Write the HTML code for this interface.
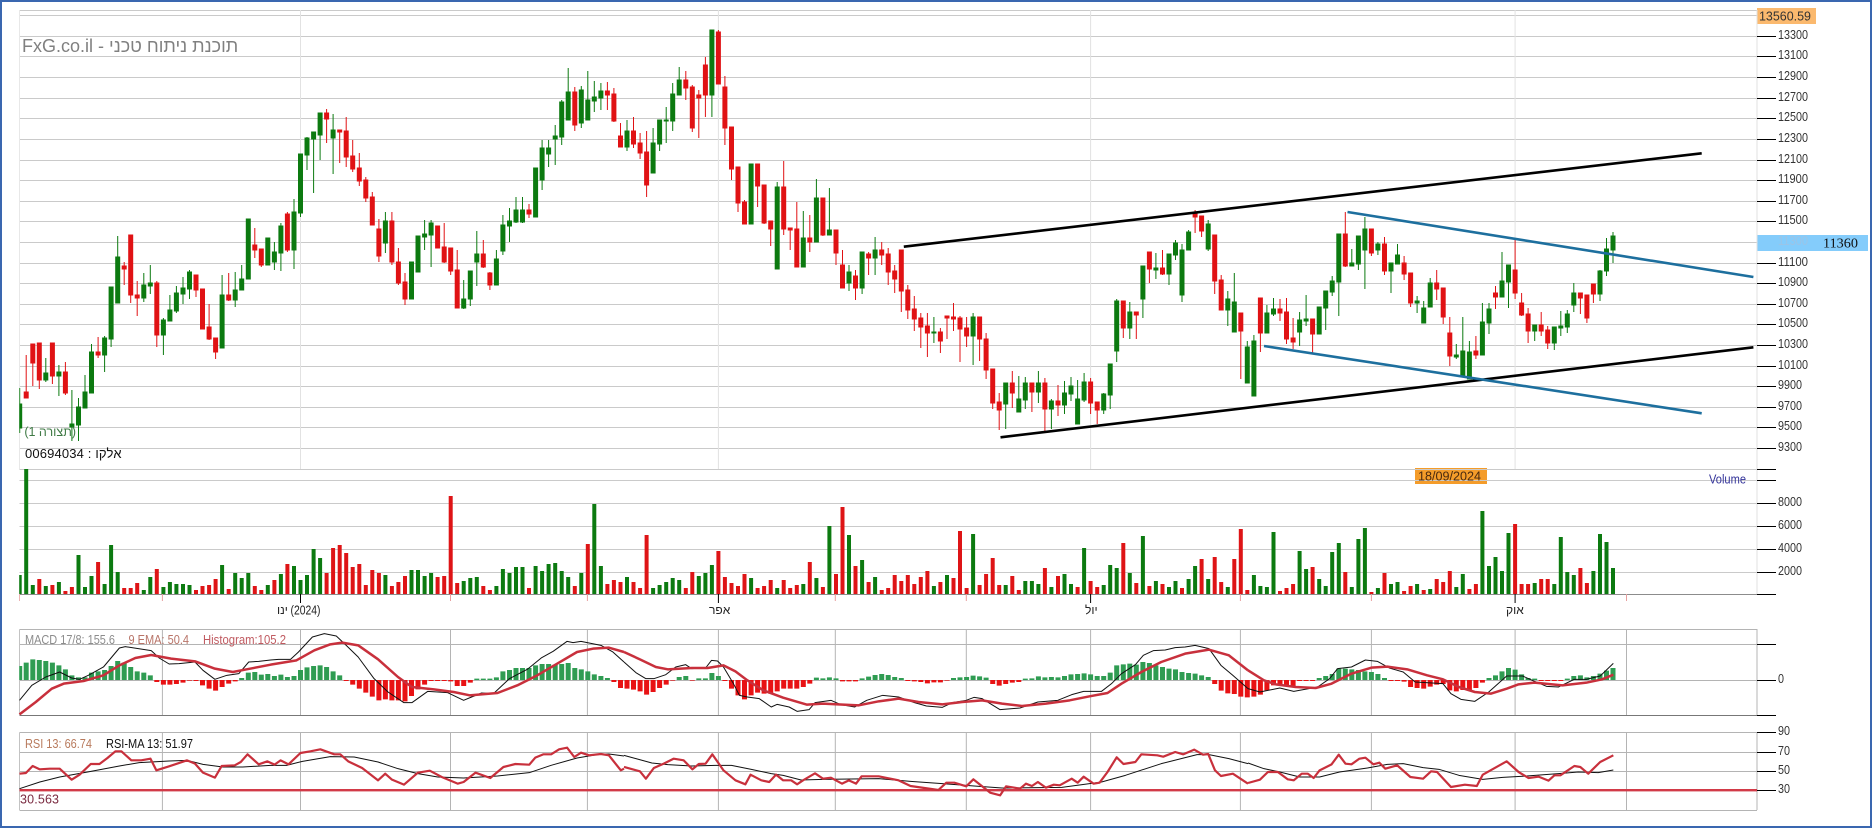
<!DOCTYPE html>
<html lang="he"><head><meta charset="utf-8"><title>FxG</title>
<style>
html,body{margin:0;padding:0;background:#fff;width:1872px;height:828px;overflow:hidden}
#f{position:absolute;left:0;top:0;width:1868px;height:824px;border:2px solid #3a67b0;overflow:hidden}
svg{position:absolute;left:0;top:0}
.t{position:absolute;white-space:nowrap;font-family:"Liberation Sans","Noto Sans CJK JP",sans-serif;line-height:1}
text{font-family:"Liberation Sans","Noto Sans CJK JP",sans-serif;font-size:13px;fill:#333}
</style></head><body>
<svg width="1872" height="828" viewBox="0 0 1872 828">
<rect x="1757" y="8" width="59" height="16" fill="#fbb96e"/>
<rect x="1757" y="235" width="111" height="16" fill="#84ccfb"/>
<rect x="1415" y="468" width="72" height="16" fill="#f49c2a"/>
<path fill="none" stroke="#cacaca" d="M19.5 10.5H1757M19.5 15.5H1757M19.5 36.5H1757M19.5 56.5H1757M19.5 77.5H1757M19.5 98.5H1757M19.5 118.5H1757M19.5 139.5H1757M19.5 160.5H1757M19.5 180.5H1757M19.5 201.5H1757M19.5 221.5H1757M19.5 242.5H1757M19.5 263.5H1757M19.5 283.5H1757M19.5 304.5H1757M19.5 324.5H1757M19.5 345.5H1757M19.5 366.5H1757M19.5 386.5H1757M19.5 407.5H1757M19.5 427.5H1757M19.5 448.5H1757M19.5 469.5H1757M19.5 480.5H1757M19.5 503.5H1757M19.5 526.5H1757M19.5 549.5H1757M19.5 572.5H1757"/>
<path fill="none" stroke="#e2e2e2" d="M19.5 10V469M300.5 10V469M718.4 10V469M1090.6 10V469M1515.1 10V469M1757 10V594"/>
<path fill="none" stroke="#8c8c8c" d="M19.5 594.5H1757"/>
<path fill="none" stroke="#b4b4b4" d="M19.5 629.5H1757V715M19.5 629.5V715M19.5 644.5H1757M19.5 680.5H1757M19.5 732.5H1757V810M19.5 732.5V810M19.5 752.5H1757M19.5 771.5H1757M19.5 810.5H1757M162.4 629V715M300.5 629V715M450.5 629V715M587.4 629V715M718.4 629V715M835.3 629V715M966.3 629V715M1090.6 629V715M1240.4 629V715M1371.4 629V715M1515.1 629V715M1626.5 629V715M162.4 732V810M300.5 732V810M450.5 732V810M587.4 732V810M718.4 732V810M835.3 732V810M966.3 732V810M1090.6 732V810M1240.4 732V810M1371.4 732V810M1515.1 732V810M1626.5 732V810"/>
<path fill="none" stroke="#777" d="M19.5 715.5H1757"/>
<path fill="none" stroke="#000" d="M1757 36.5H1776M1757 56.5H1776M1757 77.5H1776M1757 98.5H1776M1757 118.5H1776M1757 139.5H1776M1757 160.5H1776M1757 180.5H1776M1757 201.5H1776M1757 221.5H1776M1757 263.5H1776M1757 283.5H1776M1757 304.5H1776M1757 324.5H1776M1757 345.5H1776M1757 366.5H1776M1757 386.5H1776M1757 407.5H1776M1757 427.5H1776M1757 448.5H1776M1757 469.5H1776M1757 480.5H1776M1757 503.5H1776M1757 526.5H1776M1757 549.5H1776M1757 572.5H1776M1757 594.5H1776M1757 644.5H1776M1757 680.5H1776M1757 715.5H1776M1757 732.5H1776M1757 752.5H1776M1757 771.5H1776M1757 790.5H1776M300.5 594V603M718.4 594V603M1090.6 594V603M1515.1 594V603"/>
<path fill="none" stroke="#e8a0a0" d="M19.5 594V601M162.4 594V601M450.5 594V601M587.4 594V601M835.3 594V601M966.3 594V601M1240.4 594V601M1371.4 594V601M1626.5 594V601"/>

<!-- green candles -->
<path fill="#0c7a10" stroke="#0c7a10" d="M19.7 388V433M19.7 404h2V428h-4V404zM45.8 358V382M45.8 373h2V380h-4V373zM58.9 365V396M58.9 372h2V376h-4V372zM71.9 390V441M71.9 424h2V427h-4V424zM78.5 398V441M78.5 407h2V425h-4V407zM85 375V408M85 392h2V408h-4V392zM91.5 344V393M91.5 352h2V393h-4V352zM104.6 336V372M104.6 338h2V355h-4V338zM111.1 287V347M111.1 287h2V339h-4V287zM117.7 236V303M117.7 257h2V303h-4V257zM143.8 273V302M143.8 285h2V298h-4V285zM150.3 265V294M150.3 283h2V286h-4V283zM163.4 318V355M163.4 320h2V335h-4V320zM169.9 295V321M169.9 310h2V321h-4V310zM176.4 286V313M176.4 293h2V311h-4V293zM183 277V304M183 288h2V294h-4V288zM189.5 270V299M189.5 272h2V289h-4V272zM222.1 275V348M222.1 295h2V348h-4V295zM235.2 272V307M235.2 290h2V300h-4V290zM241.7 265V290M241.7 279h2V290h-4V279zM248.3 219V279M248.3 219h2V279h-4V219zM267.8 238V265M267.8 238h2V265h-4V238zM274.4 242V270M274.4 252h2V262h-4V252zM280.9 223V271M280.9 226h2V253h-4V226zM294 199V269M294 212h2V250h-4V212zM300.5 154V217M300.5 154h2V213h-4V154zM307 137V170M307 138h2V155h-4V138zM313.6 132V193M313.6 132h2V139h-4V132zM320.1 113V160M320.1 113h2V135h-4V113zM333.1 114V174M333.1 130h2V138h-4V130zM385.4 212V253M385.4 221h2V243h-4V221zM411.5 262V299M411.5 262h2V299h-4V262zM418 236V272M418 236h2V272h-4V236zM424.6 220V250M424.6 234h2V237h-4V234zM431.1 220V267M431.1 223h2V235h-4V223zM463.7 280V309M463.7 299h2V308h-4V299zM470.3 271V306M470.3 271h2V299h-4V271zM476.8 231V286M476.8 254h2V262h-4V254zM496.4 250V285M496.4 259h2V285h-4V259zM502.9 215V255M502.9 225h2V251h-4V225zM509.5 208V242M509.5 221h2V226h-4V221zM516 197V223M516 210h2V222h-4V210zM522.5 197V223M522.5 210h2V222h-4V210zM535.6 168V217M535.6 168h2V217h-4V168zM542.1 140V190M542.1 148h2V180h-4V148zM548.6 140V167M548.6 148h2V154h-4V148zM555.2 125V165M555.2 136h2V139h-4V136zM561.7 100V145M561.7 102h2V137h-4V102zM568.2 68V120M568.2 92h2V120h-4V92zM581.3 86V128M581.3 90h2V123h-4V90zM587.8 71V120M587.8 100h2V120h-4V100zM594.3 81V112M594.3 97h2V101h-4V97zM600.9 83V110M600.9 91h2V98h-4V91zM627 120V151M627 131h2V147h-4V131zM653.1 128V173M653.1 143h2V173h-4V143zM659.6 120V151M659.6 120h2V144h-4V120zM666.2 107V143M666.2 120h2V121h-4V120zM672.7 83V131M672.7 94h2V121h-4V94zM679.2 67V95M679.2 80h2V95h-4V80zM711.9 30V117M711.9 30h2V95h-4V30zM751.1 164V224M751.1 164h2V224h-4V164zM777.2 182V269M777.2 187h2V269h-4V187zM803.3 211V267M803.3 238h2V267h-4V238zM816.4 179V242M816.4 198h2V242h-4V198zM829.4 188V235M829.4 230h2V235h-4V230zM849 265V291M849 272h2V283h-4V272zM862.1 252V294M862.1 252h2V288h-4V252zM875.1 237V275M875.1 250h2V258h-4V250zM933.9 317V343M933.9 332h2V333h-4V332zM973.1 313V365M973.1 317h2V336h-4V317zM1005.7 383V429M1005.7 383h2V404h-4V383zM1018.8 376V412M1018.8 399h2V412h-4V399zM1025.3 377V409M1025.3 383h2V400h-4V383zM1038.4 371V403M1038.4 383h2V392h-4V383zM1051.4 399V429M1051.4 401h2V409h-4V401zM1064.5 381V414M1064.5 393h2V405h-4V393zM1071 377V401M1071 386h2V394h-4V386zM1077.6 380V424M1077.6 399h2V424h-4V399zM1084.1 373V402M1084.1 382h2V400h-4V382zM1103.7 393V414M1103.7 394h2V410h-4V394zM1110.2 364V409M1110.2 364h2V395h-4V364zM1116.7 299V362M1116.7 301h2V351h-4V301zM1129.8 302V339M1129.8 312h2V328h-4V312zM1142.9 266V318M1142.9 266h2V299h-4V266zM1155.9 253V279M1155.9 268h2V270h-4V268zM1169 254V285M1169 254h2V274h-4V254zM1175.5 240V260M1175.5 243h2V255h-4V243zM1182 244V302M1182 250h2V295h-4V250zM1188.6 230V250M1188.6 232h2V250h-4V232zM1208.2 220V251M1208.2 224h2V249h-4V224zM1227.8 291V326M1227.8 299h2V310h-4V299zM1234.3 273V332M1234.3 302h2V332h-4V302zM1247.3 341V383M1247.3 347h2V383h-4V347zM1253.9 335V396M1253.9 341h2V396h-4V341zM1266.9 305V333M1266.9 313h2V333h-4V313zM1273.5 298V316M1273.5 309h2V314h-4V309zM1299.6 312V346M1299.6 320h2V332h-4V320zM1306.1 295V326M1306.1 319h2V321h-4V319zM1319.2 307V334M1319.2 307h2V334h-4V307zM1325.7 291V330M1325.7 291h2V308h-4V291zM1332.2 276V296M1332.2 281h2V292h-4V281zM1338.8 234V316M1338.8 234h2V282h-4V234zM1351.8 249V266M1351.8 263h2V266h-4V263zM1358.4 236V270M1358.4 236h2V264h-4V236zM1364.9 217V289M1364.9 229h2V250h-4V229zM1377.9 242V255M1377.9 244h2V250h-4V244zM1391 263V293M1391 263h2V271h-4V263zM1397.5 244V264M1397.5 255h2V264h-4V255zM1417.1 296V313M1417.1 301h2V303h-4V301zM1423.7 301V323M1423.7 308h2V323h-4V308zM1430.2 278V307M1430.2 283h2V307h-4V283zM1456.3 344V359M1456.3 355h2V357h-4V355zM1462.8 317V376M1462.8 351h2V376h-4V351zM1469.4 341V379M1469.4 352h2V379h-4V352zM1482.4 303V355M1482.4 322h2V355h-4V322zM1489 303V334M1489 309h2V323h-4V309zM1502 252V297M1502 281h2V297h-4V281zM1508.5 265V308M1508.5 265h2V282h-4V265zM1534.7 325V341M1534.7 325h2V331h-4V325zM1554.3 327V350M1554.3 327h2V343h-4V327zM1560.8 311V336M1560.8 326h2V328h-4V326zM1567.3 310V333M1567.3 314h2V327h-4V314zM1573.8 283V312M1573.8 293h2V305h-4V293zM1600 270V301M1600 271h2V294h-4V271zM1606.5 238V276M1606.5 249h2V271h-4V249zM1613 232V263M1613 236h2V250h-4V236z"/>
<!-- red candles -->
<path fill="#e01214" stroke="#e01214" d="M26.2 355V398M26.2 392h2V398h-4V392zM32.8 344V386M32.8 344h2V363h-4V344zM39.3 343V389M39.3 343h2V380h-4V343zM52.4 343V384M52.4 343h2V376h-4V343zM65.4 362V395M65.4 372h2V393h-4V372zM98.1 337V358M98.1 352h2V355h-4V352zM124.2 262V285M124.2 266h2V269h-4V266zM130.7 235V303M130.7 235h2V295h-4V235zM137.2 281V316M137.2 295h2V298h-4V295zM156.8 281V347M156.8 283h2V335h-4V283zM196 275V297M196 275h2V290h-4V275zM202.5 289V329M202.5 289h2V329h-4V289zM209.1 304V340M209.1 327h2V339h-4V327zM215.6 338V359M215.6 338h2V352h-4V338zM228.7 273V301M228.7 295h2V300h-4V295zM254.8 228V258M254.8 245h2V250h-4V245zM261.3 249V267M261.3 249h2V265h-4V249zM287.4 212V252M287.4 214h2V250h-4V214zM326.6 109V143M326.6 113h2V119h-4V113zM339.7 130V163M339.7 130h2V132h-4V130zM346.2 117V167M346.2 131h2V157h-4V131zM352.7 140V172M352.7 156h2V169h-4V156zM359.3 153V186M359.3 168h2V181h-4V168zM365.8 177V202M365.8 180h2V198h-4V180zM372.3 192V225M372.3 197h2V225h-4V197zM378.9 219V262M378.9 229h2V256h-4V229zM391.9 212V265M391.9 221h2V262h-4V221zM398.4 248V285M398.4 262h2V283h-4V262zM405 273V305M405 282h2V299h-4V282zM437.6 226V248M437.6 226h2V248h-4V226zM444.2 223V263M444.2 247h2V262h-4V247zM450.7 248V275M450.7 248h2V271h-4V248zM457.2 250V308M457.2 270h2V308h-4V270zM483.3 240V268M483.3 254h2V267h-4V254zM489.9 272V290M489.9 273h2V285h-4V273zM529 204V218M529 210h2V214h-4V210zM574.8 87V131M574.8 92h2V125h-4V92zM607.4 82V110M607.4 91h2V95h-4V91zM613.9 88V122M613.9 94h2V121h-4V94zM620.5 123V147M620.5 136h2V147h-4V136zM633.5 117V148M633.5 131h2V144h-4V131zM640.1 133V159M640.1 143h2V153h-4V143zM646.6 131V197M646.6 152h2V185h-4V152zM685.8 71V100M685.8 80h2V88h-4V80zM692.3 85V132M692.3 87h2V128h-4V87zM698.8 90V138M698.8 95h2V98h-4V95zM705.4 57V117M705.4 65h2V95h-4V65zM718.4 30V84M718.4 32h2V84h-4V32zM724.9 76V145M724.9 87h2V128h-4V87zM731.5 127V180M731.5 127h2V169h-4V127zM738 167V212M738 167h2V203h-4V167zM744.5 200V224M744.5 202h2V224h-4V202zM757.6 164V207M757.6 164h2V186h-4V164zM764.1 185V224M764.1 185h2V223h-4V185zM770.7 221V246M770.7 221h2V229h-4V221zM783.7 161V235M783.7 187h2V229h-4V187zM790.2 228V250M790.2 228h2V230h-4V228zM796.8 202V267M796.8 229h2V267h-4V229zM809.8 215V252M809.8 238h2V242h-4V238zM822.9 198V236M822.9 198h2V235h-4V198zM836 230V265M836 230h2V253h-4V230zM842.5 250V288M842.5 265h2V288h-4V265zM855.5 270V300M855.5 276h2V288h-4V276zM868.6 252V275M868.6 254h2V258h-4V254zM881.7 242V265M881.7 250h2V255h-4V250zM888.2 248V285M888.2 254h2V272h-4V254zM894.7 265V293M894.7 271h2V279h-4V271zM901.3 250V312M901.3 250h2V291h-4V250zM907.8 285V319M907.8 290h2V310h-4V290zM914.3 296V331M914.3 309h2V319h-4V309zM920.8 313V348M920.8 318h2V327h-4V318zM927.4 313V357M927.4 326h2V333h-4V326zM940.4 328V353M940.4 332h2V341h-4V332zM947 316V339M947 316h2V318h-4V316zM953.5 303V331M953.5 317h2V319h-4V317zM960 316V362M960 318h2V329h-4V318zM966.6 317V347M966.6 328h2V336h-4V328zM979.6 317V361M979.6 317h2V339h-4V317zM986.1 333V379M986.1 339h2V370h-4V339zM992.7 369V409M992.7 369h2V403h-4V369zM999.2 393V430M999.2 402h2V410h-4V402zM1012.3 371V408M1012.3 383h2V393h-4V383zM1031.9 383V412M1031.9 383h2V392h-4V383zM1044.9 378V431M1044.9 383h2V409h-4V383zM1058 385V416M1058 401h2V405h-4V401zM1090.6 378V414M1090.6 382h2V403h-4V382zM1097.2 402V424M1097.2 402h2V410h-4V402zM1123.3 301V338M1123.3 301h2V328h-4V301zM1136.3 312V339M1136.3 312h2V315h-4V312zM1149.4 252V283M1149.4 252h2V269h-4V252zM1162.5 250V275M1162.5 268h2V274h-4V268zM1195.1 210V233M1195.1 213h2V217h-4V213zM1201.6 216V237M1201.6 216h2V231h-4V216zM1214.7 235V294M1214.7 235h2V281h-4V235zM1221.2 275V310M1221.2 280h2V310h-4V280zM1240.8 313V379M1240.8 313h2V331h-4V313zM1260.4 298V352M1260.4 298h2V333h-4V298zM1280 299V321M1280 309h2V313h-4V309zM1286.5 298V344M1286.5 312h2V339h-4V312zM1293.1 318V349M1293.1 338h2V342h-4V338zM1312.6 319V353M1312.6 319h2V334h-4V319zM1345.3 212V267M1345.3 234h2V266h-4V234zM1371.4 229V256M1371.4 229h2V253h-4V229zM1384.5 237V275M1384.5 244h2V271h-4V244zM1404.1 256V280M1404.1 263h2V274h-4V263zM1410.6 273V307M1410.6 273h2V303h-4V273zM1436.7 270V300M1436.7 283h2V289h-4V283zM1443.2 288V324M1443.2 288h2V317h-4V288zM1449.8 317V366M1449.8 333h2V356h-4V333zM1475.9 336V359M1475.9 351h2V355h-4V351zM1495.5 286V309M1495.5 293h2V297h-4V293zM1515.1 238V299M1515.1 270h2V293h-4V270zM1521.6 293V316M1521.6 303h2V315h-4V303zM1528.1 308V343M1528.1 314h2V331h-4V314zM1541.2 312V336M1541.2 325h2V331h-4V325zM1547.7 326V349M1547.7 330h2V343h-4V330zM1580.4 293V314M1580.4 293h2V298h-4V293zM1586.9 295V323M1586.9 295h2V318h-4V295zM1593.4 284V303M1593.4 284h2V294h-4V284z"/>

<!-- volume -->
<path fill="none" stroke="#0c7a10" stroke-width="4" d="M19.7 575V594M26.2 469V594M32.8 585V594M45.8 586V594M58.9 582V594M78.5 555V594M85 587V594M91.5 576V594M104.6 584V594M111.1 545V594M117.7 572V594M143.8 590V594M150.3 577V594M163.4 587V594M169.9 582V594M176.4 584V594M183 584V594M189.5 585V594M222.1 565V594M235.2 573V594M241.7 578V594M248.3 573V594M267.8 585V594M280.9 574V594M294 566V594M300.5 580V594M307 575V594M313.6 549V594M320.1 558V594M385.4 575V594M411.5 570V594M418 570V594M424.6 576V594M431.1 573V594M463.7 581V594M470.3 578V594M476.8 577V594M496.4 586V594M502.9 569V594M509.5 573V594M516 567V594M522.5 567V594M535.6 566V594M542.1 571V594M548.6 564V594M555.2 563V594M561.7 571V594M568.2 577V594M581.3 573V594M594.3 504V594M600.9 566V594M627 577V594M653.1 588V594M659.6 585V594M666.2 582V594M672.7 578V594M679.2 580V594M698.8 576V594M705.4 573V594M711.9 565V594M751.1 578V594M777.2 588V594M803.3 584V594M816.4 578V594M829.4 526V594M849 535V594M862.1 560V594M875.1 577V594M933.9 586V594M947 575V594M973.1 534V594M1005.7 585V594M1025.3 581V594M1031.9 581V594M1038.4 584V594M1051.4 587V594M1064.5 574V594M1071 584V594M1084.1 548V594M1103.7 585V594M1110.2 565V594M1116.7 568V594M1129.8 573V594M1142.9 536V594M1155.9 581V594M1169 587V594M1175.5 581V594M1188.6 579V594M1195.1 566V594M1208.2 579V594M1227.8 587V594M1253.9 575V594M1260.4 586V594M1266.9 587V594M1273.5 532V594M1299.6 551V594M1306.1 569V594M1319.2 579V594M1325.7 586V594M1332.2 552V594M1338.8 543V594M1351.8 587V594M1358.4 539V594M1364.9 528V594M1377.9 588V594M1391 584V594M1397.5 582V594M1417.1 584V594M1430.2 589V594M1456.3 587V594M1462.8 574V594M1482.4 511V594M1489 566V594M1495.5 557V594M1502 571V594M1508.5 533V594M1534.7 583V594M1554.3 584V594M1560.8 537V594M1567.3 572V594M1573.8 575V594M1593.4 571V594M1600 534V594M1606.5 542V594M1613 568V594"/>
<path fill="none" stroke="#de1416" stroke-width="4" d="M39.3 579V594M52.4 585V594M65.4 591V594M71.9 587V594M98.1 562V594M124.2 588V594M130.7 588V594M137.2 583V594M156.8 569V594M196 590V594M202.5 586V594M209.1 585V594M215.6 579V594M228.7 589V594M254.8 586V594M261.3 590V594M274.4 580V594M287.4 564V594M326.6 573V594M333.1 548V594M339.7 545V594M346.2 553V594M352.7 567V594M359.3 564V594M365.8 585V594M372.3 570V594M378.9 573V594M391.9 586V594M398.4 582V594M405 576V594M437.6 577V594M444.2 576V594M450.7 496V594M457.2 583V594M483.3 586V594M489.9 590V594M529 588V594M574.8 586V594M587.8 544V594M607.4 584V594M613.9 580V594M620.5 582V594M633.5 582V594M640.1 588V594M646.6 535V594M685.8 588V594M692.3 572V594M718.4 551V594M724.9 577V594M731.5 583V594M738 586V594M744.5 574V594M757.6 588V594M764.1 586V594M770.7 580V594M783.7 580V594M790.2 588V594M796.8 585V594M809.8 562V594M822.9 587V594M836 574V594M842.5 507V594M855.5 566V594M868.6 582V594M881.7 590V594M888.2 588V594M894.7 575V594M901.3 581V594M907.8 575V594M914.3 584V594M920.8 577V594M927.4 571V594M940.4 582V594M953.5 578V594M960 531V594M966.6 588V594M979.6 585V594M986.1 574V594M992.7 558V594M999.2 585V594M1012.3 576V594M1018.8 590V594M1044.9 568V594M1058 576V594M1077.6 587V594M1090.6 581V594M1097.2 587V594M1123.3 543V594M1136.3 583V594M1149.4 586V594M1162.5 584V594M1182 588V594M1201.6 559V594M1214.7 557V594M1221.2 582V594M1234.3 559V594M1240.8 529V594M1247.3 590V594M1280 591V594M1286.5 588V594M1293.1 584V594M1312.6 567V594M1345.3 572V594M1371.4 592V594M1384.5 573V594M1404.1 591V594M1410.6 586V594M1423.7 590V594M1436.7 579V594M1443.2 582V594M1449.8 571V594M1469.4 589V594M1475.9 584V594M1515.1 524V594M1521.6 584V594M1528.1 584V594M1541.2 579V594M1547.7 579V594M1580.4 568V594M1586.9 583V594"/>

<!-- MACD histogram -->
<g transform="translate(0,552) scale(1,.33333)">
<path fill="none" stroke="#2f9c52" stroke-width="5" d="M19.7 342V384M26.2 332V384M32.8 322V384M39.3 324V384M45.8 327V384M52.4 332V384M58.9 340V384M65.4 352V384M71.9 370V384M78.5 376V384M85 376V384M91.5 362V384M98.1 358V384M104.6 354V384M111.1 342V384M117.7 327V384M124.2 332V384M130.7 345V384M137.2 358V384M143.8 362V384M150.3 370V384M241.7 378V384M248.3 362V384M254.8 360V384M261.3 368V384M267.8 366V384M274.4 372V384M280.9 368V384M287.4 375V384M294 372V384M300.5 354V384M307 346V384M313.6 342V384M320.1 340V384M326.6 345V384M333.1 358V384M339.7 370V384M476.8 380V384M483.3 380V384M489.9 380V384M496.4 376V384M502.9 358V384M509.5 354V384M516 348V384M522.5 348V384M529 348V384M535.6 340V384M542.1 336V384M548.6 336V384M555.2 338V384M561.7 336V384M568.2 333V384M574.8 348V384M581.3 352V384M587.8 358V384M594.3 367V384M600.9 372V384M607.4 378V384M679.2 375V384M685.8 372V384M698.8 379V384M705.4 379V384M711.9 363V384M718.4 372V384M816.4 377V384M822.9 379V384M829.4 376V384M836 379V384M862.1 379V384M868.6 374V384M875.1 369V384M881.7 366V384M888.2 369V384M894.7 375V384M901.3 378V384M953.5 378V384M960 376V384M966.6 375V384M973.1 371V384M979.6 373V384M986.1 377V384M1025.3 380V384M1031.9 379V384M1038.4 373V384M1044.9 376V384M1051.4 375V384M1058 376V384M1064.5 372V384M1071 367V384M1077.6 366V384M1084.1 364V384M1090.6 367V384M1097.2 372V384M1103.7 372V384M1110.2 362V384M1116.7 340V384M1123.3 337V384M1129.8 335V384M1136.3 338V384M1142.9 330V384M1149.4 333V384M1155.9 340V384M1162.5 345V384M1169 350V384M1175.5 352V384M1182 360V384M1188.6 363V384M1195.1 365V384M1201.6 370V384M1208.2 375V384M1319.2 378V384M1325.7 372V384M1332.2 366V384M1338.8 350V384M1345.3 350V384M1351.8 352V384M1358.4 354V384M1364.9 358V384M1371.4 360V384M1377.9 366V384M1384.5 378V384M1489 378V384M1495.5 370V384M1502 358V384M1508.5 348V384M1515.1 353V384M1521.6 367V384M1528.1 378V384M1534.7 380V384M1567.3 380V384M1573.8 372V384M1580.4 370V384M1586.9 376V384M1593.4 372V384M1600 365V384M1606.5 356V384M1613 348V384"/>
<path fill="none" stroke="#e81214" stroke-width="5" d="M156.8 384V390M163.4 384V398M169.9 384V398M176.4 384V396M183 384V392M189.5 384V386M196 384V387M202.5 384V400M209.1 384V410M215.6 384V416M222.1 384V405M228.7 384V395M235.2 384V388M346.2 384V387M352.7 384V398M359.3 384V410M365.8 384V422M372.3 384V434M378.9 384V445M385.4 384V442M391.9 384V445M398.4 384V445M405 384V448M411.5 384V432M418 384V412M424.6 384V398M431.1 384V387M437.6 384V387M444.2 384V387M450.7 384V388M457.2 384V402M463.7 384V402M470.3 384V392M613.9 384V390M620.5 384V408M627 384V410M633.5 384V413M640.1 384V418M646.6 384V428M653.1 384V420M659.6 384V408M666.2 384V398M672.7 384V386M692.3 384V386M724.9 384V387M731.5 384V410M738 384V430M744.5 384V442M751.1 384V430M757.6 384V422M764.1 384V425M770.7 384V425M777.2 384V418M783.7 384V410M790.2 384V410M796.8 384V410M803.3 384V405M809.8 384V395M842.5 384V388M849 384V388M855.5 384V388M907.8 384V387M914.3 384V388M920.8 384V390M927.4 384V394M933.9 384V391M940.4 384V391M947 384V386M992.7 384V396M999.2 384V401M1005.7 384V396M1012.3 384V392M1018.8 384V390M1214.7 384V396M1221.2 384V416M1227.8 384V424M1234.3 384V426M1240.8 384V434M1247.3 384V436M1253.9 384V434M1260.4 384V428M1266.9 384V415M1273.5 384V400M1280 384V398M1286.5 384V400M1293.1 384V403M1299.6 384V387M1306.1 384V387M1312.6 384V387M1391 384V387M1397.5 384V387M1404.1 384V389M1410.6 384V405M1417.1 384V408M1423.7 384V410M1430.2 384V404M1436.7 384V398M1443.2 384V396M1449.8 384V415M1456.3 384V418M1462.8 384V414M1469.4 384V416M1475.9 384V408M1482.4 384V392M1541.2 384V387M1547.7 384V387M1554.3 384V387M1560.8 384V387"/>
</g>

<rect x="14" y="10" width="5.2" height="800" fill="#fff"/>
<rect x="19.5" y="789" width="1737.5" height="2.4" fill="#d23a48"/>

<!-- indicator curves -->
<g fill="none" stroke-linejoin="round">
<g transform="translate(0,552) scale(.39796,.33333)">
<polyline vector-effect="non-scaling-stroke" stroke="#111" stroke-width="1" points="49,445 80,400 115,375 150,360 180,378 200,382 222,370 260,345 300,288 315,284 380,296 400,318 425,336 450,335 490,330 510,355 540,382 570,370 600,365 625,330 650,328 680,324 700,322 730,322 750,300 785,255 815,245 845,252 870,280 900,315 940,380 975,420 1015,452 1035,452 1075,418 1125,422 1165,445 1185,435 1210,423 1240,425 1280,380 1325,352 1360,318 1390,298 1425,268 1440,272 1460,268 1510,280 1540,300 1568,330"/>
<polyline vector-effect="non-scaling-stroke" stroke="#c8303c" stroke-width="2.5" points="49,487 90,450 130,410 160,395 210,387 260,370 300,340 340,318 380,309 430,320 490,328 540,350 585,360 620,352 680,338 745,325 790,295 830,277 860,272 900,280 950,322 1000,375 1035,405 1090,412 1140,420 1180,430 1250,423 1300,400 1350,370 1400,335 1450,300 1490,290 1530,287 1568,300"/>
<polyline vector-effect="non-scaling-stroke" stroke="#111" stroke-width="1" points="49,710 100,690 150,675 220,660 300,642 350,632 425,627 470,625 510,637 560,645 610,645 680,640 720,640 760,628 830,614 890,615 950,630 1000,650 1050,665 1100,675 1165,678 1250,672 1330,662 1385,640 1450,618 1500,608 1530,606 1568,612"/>
<polyline vector-effect="non-scaling-stroke" stroke="#c8303c" stroke-width="2.2" points="49,665 65,663 82,642 100,652 125,650 150,650 180,683 200,668 228,636 250,636 270,618 290,598 305,598 330,625 355,625 378,620 393,655 425,643 470,625 490,635 510,662 540,677 557,642 590,640 605,630 622,607 650,637 672,628 690,638 705,625 725,637 755,603 780,598 805,592 840,607 855,607 875,628 910,648 950,685 968,665 985,683 1015,698 1050,662 1080,656 1110,675 1150,695 1165,690 1195,662 1232,678 1265,645 1295,636 1330,638 1345,617 1365,607 1385,607 1405,592 1425,587 1443,615 1460,602 1480,610 1510,606 1530,610 1560,655 1568,650"/>
</g>
<g transform="translate(624,552) scale(.39796,.33333)">
<polyline vector-effect="non-scaling-stroke" stroke="#111" stroke-width="1" points="0,330 30,362 55,380 75,380 105,368 130,345 155,338 170,350 205,348 220,325 235,327 250,345 275,395 290,430 310,435 340,440 370,465 385,457 415,465 435,478 465,473 480,452 520,445 545,458 580,465 610,445 650,430 690,435 730,452 760,462 800,466 825,452 860,445 880,436 900,440 945,473 995,468 1040,450 1090,445 1125,428 1155,418 1200,418 1225,395 1250,365 1285,338 1305,310 1330,296 1360,294 1385,287 1410,285 1435,280 1470,290 1500,340 1530,370 1568,410"/>
<polyline vector-effect="non-scaling-stroke" stroke="#c8303c" stroke-width="2.5" points="0,300 40,322 80,345 110,352 170,348 210,348 250,340 280,358 310,385 350,415 400,437 460,458 500,455 550,458 590,460 640,448 690,440 740,450 800,457 850,450 900,445 950,455 1000,462 1060,455 1120,445 1170,433 1215,423 1250,395 1300,360 1350,330 1410,305 1470,293 1520,310 1568,355"/>
<polyline vector-effect="non-scaling-stroke" stroke="#111" stroke-width="1" points="0,610 30,620 70,633 110,638 170,642 230,640 270,640 320,652 370,665 400,670 445,684 500,682 640,680 720,688 800,695 880,702 950,708 1100,706 1170,695 1200,690 1260,670 1350,635 1440,608 1470,608 1520,620 1568,635"/>
<polyline vector-effect="non-scaling-stroke" stroke="#c8303c" stroke-width="2.2" points="0,645 40,658 55,680 75,648 100,635 125,620 150,625 172,652 188,636 205,635 222,607 250,655 280,685 305,697 318,668 345,685 365,690 382,668 400,685 420,685 435,697 450,685 480,664 500,680 520,677 548,695 565,685 583,695 597,673 640,673 690,685 720,702 790,714 810,692 830,692 860,703 878,682 920,722 945,730 960,703 995,710 1010,695 1025,702 1040,690 1060,707 1080,698 1095,700 1125,680 1140,692 1155,674 1180,695 1195,692 1215,660 1238,616 1255,636 1285,630 1300,607 1340,610 1355,614 1385,600 1405,607 1433,593 1455,608 1468,606 1485,655 1500,672 1530,665 1568,695"/>
</g>
<g transform="translate(1248,552) scale(.39796,.33333)">
<polyline vector-effect="non-scaling-stroke" stroke="#111" stroke-width="1" points="0,410 30,420 80,408 115,418 175,405 205,380 225,350 260,345 295,324 325,328 355,348 390,360 420,390 490,395 510,425 535,442 570,448 605,420 650,372 690,372 720,388 750,403 780,405 820,382 850,382 885,372 918,334"/>
<polyline vector-effect="non-scaling-stroke" stroke="#c8303c" stroke-width="2.5" points="0,355 40,385 70,397 120,405 170,408 210,395 260,365 310,347 350,344 400,352 450,370 490,382 530,405 570,420 610,425 650,410 680,397 720,392 790,400 850,392 890,382 918,368"/>
<polyline vector-effect="non-scaling-stroke" stroke="#111" stroke-width="1" points="0,633 40,650 80,660 130,675 180,675 230,660 300,648 350,637 390,635 440,647 480,652 530,670 590,682 640,676 700,672 780,665 830,660 880,662 918,654"/>
<polyline vector-effect="non-scaling-stroke" stroke="#c8303c" stroke-width="2.2" points="0,693 30,683 50,660 75,660 100,682 115,685 135,665 150,665 165,678 180,655 210,637 228,608 245,635 260,637 280,620 295,617 315,637 330,632 345,650 375,640 408,675 440,680 460,658 475,660 510,705 545,698 575,702 590,668 650,628 680,660 705,678 730,674 755,686 770,670 785,670 820,642 835,645 855,665 885,630 918,610"/>
</g>
</g>

<!-- trend lines -->
<path fill="none" stroke="#000" stroke-width="2.6" d="M903.8 246.7L1701.7 153.3M1000.5 437.3L1753.4 347.3"/>
<path fill="none" stroke="#1d6f9e" stroke-width="2.6" d="M1347.5 212L1753.4 277M1264 346L1701.7 413.3"/>

<!-- axis labels -->
<text x="1759" y="20.5" textLength="52" lengthAdjust="spacingAndGlyphs">13560.59</text>
<g transform="translate(0,-1.5)">
<text x="1778" y="40.5" textLength="30" lengthAdjust="spacingAndGlyphs">13300</text>
<text x="1778" y="60.5" textLength="30" lengthAdjust="spacingAndGlyphs">13100</text>
<text x="1778" y="81.5" textLength="30" lengthAdjust="spacingAndGlyphs">12900</text>
<text x="1778" y="102.5" textLength="30" lengthAdjust="spacingAndGlyphs">12700</text>
<text x="1778" y="122.5" textLength="30" lengthAdjust="spacingAndGlyphs">12500</text>
<text x="1778" y="143.5" textLength="30" lengthAdjust="spacingAndGlyphs">12300</text>
<text x="1778" y="164.5" textLength="30" lengthAdjust="spacingAndGlyphs">12100</text>
<text x="1778" y="184.5" textLength="30" lengthAdjust="spacingAndGlyphs">11900</text>
<text x="1778" y="205.5" textLength="30" lengthAdjust="spacingAndGlyphs">11700</text>
<text x="1778" y="225.5" textLength="30" lengthAdjust="spacingAndGlyphs">11500</text>
<text x="1778" y="246.5" textLength="30" lengthAdjust="spacingAndGlyphs" style="fill:#9cc4e6">11300</text>
<text x="1778" y="267.5" textLength="30" lengthAdjust="spacingAndGlyphs">11100</text>
<text x="1778" y="287.5" textLength="30" lengthAdjust="spacingAndGlyphs">10900</text>
<text x="1778" y="308.5" textLength="30" lengthAdjust="spacingAndGlyphs">10700</text>
<text x="1778" y="328.5" textLength="30" lengthAdjust="spacingAndGlyphs">10500</text>
<text x="1778" y="349.5" textLength="30" lengthAdjust="spacingAndGlyphs">10300</text>
<text x="1778" y="370.5" textLength="30" lengthAdjust="spacingAndGlyphs">10100</text>
<text x="1778" y="390.5" textLength="24" lengthAdjust="spacingAndGlyphs">9900</text>
<text x="1778" y="411.5" textLength="24" lengthAdjust="spacingAndGlyphs">9700</text>
<text x="1778" y="431.5" textLength="24" lengthAdjust="spacingAndGlyphs">9500</text>
<text x="1778" y="452.5" textLength="24" lengthAdjust="spacingAndGlyphs">9300</text>
<text x="1778" y="507.5" textLength="24" lengthAdjust="spacingAndGlyphs">8000</text>
<text x="1778" y="530.5" textLength="24" lengthAdjust="spacingAndGlyphs">6000</text>
<text x="1778" y="553.5" textLength="24" lengthAdjust="spacingAndGlyphs">4000</text>
<text x="1778" y="576.5" textLength="24" lengthAdjust="spacingAndGlyphs">2000</text>
<text x="1778" y="684.5" textLength="6" lengthAdjust="spacingAndGlyphs">0</text>
<text x="1778" y="736.5" textLength="12" lengthAdjust="spacingAndGlyphs">90</text>
<text x="1778" y="756.5" textLength="12" lengthAdjust="spacingAndGlyphs">70</text>
<text x="1778" y="775.5" textLength="12" lengthAdjust="spacingAndGlyphs">50</text>
<text x="1778" y="794.5" textLength="12" lengthAdjust="spacingAndGlyphs">30</text>
</g>
<text x="1823" y="247.5" textLength="35" lengthAdjust="spacingAndGlyphs" style="font-family:'Liberation Serif',serif;font-size:14px;fill:#111">11360</text>
<text x="1418" y="480.5" textLength="63" lengthAdjust="spacingAndGlyphs" style="fill:#4a2a10">18/09/2024</text>
<text x="1709" y="483.5" textLength="37" lengthAdjust="spacingAndGlyphs" style="fill:#34349a;font-size:12.5px">Volume</text>
<text x="25" y="644" textLength="90" lengthAdjust="spacingAndGlyphs" style="fill:#8c8c8c;font-size:12.5px">MACD 17/8: 155.6</text>
<text x="128.5" y="644" textLength="60.5" lengthAdjust="spacingAndGlyphs" style="fill:#b87468;font-size:12.5px">9 EMA: 50.4</text>
<text x="203" y="644" textLength="83" lengthAdjust="spacingAndGlyphs" style="fill:#c05a60;font-size:12.5px">Histogram:105.2</text>
<text x="25" y="748" textLength="67" lengthAdjust="spacingAndGlyphs" style="fill:#b87a5c;font-size:12.5px">RSI 13: 66.74</text>
<text x="106" y="748" textLength="87" lengthAdjust="spacingAndGlyphs" style="fill:#111;font-size:12.5px">RSI-MA 13: 51.97</text>
<text x="20" y="803.5" textLength="39" style="fill:#7a2a40;font-size:12.5px">30.563</text>
<text x="290.5" y="614.5" textLength="30" lengthAdjust="spacingAndGlyphs" style="fill:#222;font-size:13px">(2024)</text>
</svg>
<div class="t" style="left:22px;top:37px;font-size:18px;color:#808080">FxG.co.il - תוכנת ניתוח טכני</div>
<div class="t" dir="rtl" style="left:26px;top:426px;width:50px;font-size:12.5px;color:#3f7a45">(תצורה 1)</div>
<div class="t" dir="ltr" style="left:25px;top:447px;font-size:13px;letter-spacing:.15px;color:#111">00694034 : אלקו</div>
<div class="t" style="left:277px;top:604px;font-size:12px;color:#222">ינו</div>
<div class="t" style="left:709px;top:604px;font-size:12px;color:#222">אפר</div>
<div class="t" style="left:1085px;top:604px;font-size:12px;color:#222">יול</div>
<div class="t" style="left:1506px;top:604px;font-size:12px;color:#222">אוק</div>
<div id="f"></div>
</body></html>
